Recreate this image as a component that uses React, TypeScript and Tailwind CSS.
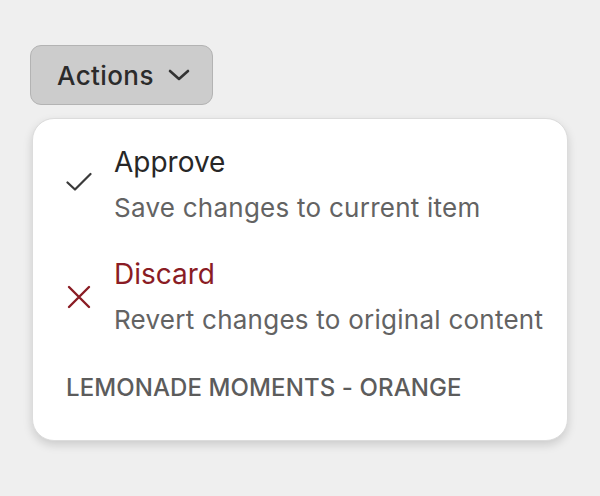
import React from 'react';

const font = { fontFamily: 'Inter, "Noto Sans", sans-serif' };

type ItemProps = {
  icon: React.ReactNode;
  title: string;
  description: string;
  danger?: boolean;
};

const MenuItem: React.FC<ItemProps> = ({ icon, title, description, danger }) => (
  <div className="flex items-center gap-[22px]">
    <div className="flex w-[26px] shrink-0 justify-center">{icon}</div>
    <div className="flex flex-col gap-[13px]">
      <span className={`text-[28px] leading-[34px] ${danger ? 'text-[#8a1c24]' : 'text-[#272727]'}`}>{title}</span>
      <span className="text-[26px] leading-[32px] tracking-[0.25px] text-[#636363]">{description}</span>
    </div>
  </div>
);

const CheckIcon = () => (
  <svg width="26" height="26" viewBox="0 0 26 26" fill="none" stroke="#3a3a3a" strokeWidth="2.2" strokeLinecap="round" strokeLinejoin="round">
    <path d="M1.5 7.5 L9 14.5 L24.5 -1" transform="translate(0 3)" />
  </svg>
);

const XIcon = () => (
  <svg width="24" height="24" viewBox="0 0 24 24" fill="none" stroke="#8a1c24" strokeWidth="2.4" strokeLinecap="round">
    <path d="M2 2 L22 22 M22 2 L2 22" />
  </svg>
);

export default function App() {
  return (
    <div className="min-h-[496px] w-[600px] bg-[#efefef] pl-[30px] pt-[45px]" style={font}>
      <button className="flex h-[60px] w-[183px] items-center gap-[14px] rounded-[11px] border border-[#b3b3b3] bg-[#cccccc] pl-[26px] text-[26px] font-medium tracking-[0.4px] text-[#2b2b2b]">
        <span>Actions</span>
        <svg width="22" height="12" viewBox="0 0 22 12" fill="none" stroke="#333" strokeWidth="2.6" strokeLinecap="round" strokeLinejoin="round">
          <path d="M2 2 L11 10 L20 2" />
        </svg>
      </button>
      <div className="ml-[2px] mt-[13px] flex w-[536px] flex-col rounded-[22px] border border-[#dcdcdc] bg-white pb-[37px] pl-[33px] pt-[26px] shadow-[0_4px_10px_rgba(0,0,0,0.15)]">
        <MenuItem icon={<CheckIcon />} title="Approve" description="Save changes to current item" />
        <div className="mt-[33px]">
          <MenuItem icon={<XIcon />} title="Discard" description="Revert changes to original content" danger />
        </div>
        <div className="mt-[37px] text-[24px] font-medium leading-[30px] tracking-[0.1px] text-[#5c5c5c]">
          LEMONADE MOMENTS - ORANGE
        </div>
      </div>
    </div>
  );
}
